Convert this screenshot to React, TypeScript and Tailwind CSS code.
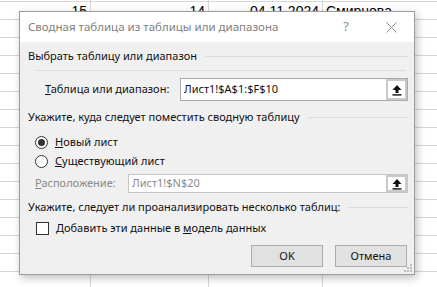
import React from "react";

const ui = { fontFamily: '"Noto Sans", "Open Sans", sans-serif' };
const cell = { fontFamily: '"Liberation Sans", Arial, sans-serif' };

const rows = Array.from({ length: 17 });

function UpButton() {
  return (
    <div className="flex h-full w-[21px] items-center justify-center border-2 border-[#c9c9c9] bg-white">
      <svg width="10" height="12" viewBox="0 0 10 12">
        <path d="M5 1 L9.5 6 L6.5 6 L6.5 9 L3.5 9 L3.5 6 L0.5 6 Z" fill="#111" />
        <rect x="0.5" y="10.2" width="9" height="1.4" fill="#111" />
      </svg>
    </div>
  );
}

function Heading({ children, top }: { children: React.ReactNode; top: string }) {
  return (
    <div className={`flex items-center gap-2 h-[16px] ${top}`}>
      <span className="whitespace-nowrap text-[11px] text-[#111]">{children}</span>
      <div className="h-px flex-1 bg-[#dcdcdc]" />
    </div>
  );
}

function Radio({ checked, children, top }: { checked?: boolean; children: React.ReactNode; top: string }) {
  return (
    <div className={`flex items-center h-[18px] pl-[7px] ${top}`}>
      <div className="flex h-[13px] w-[13px] items-center justify-center rounded-full border border-[#333] bg-white">
        {checked && <div className="h-[7px] w-[7px] rounded-full bg-[#333]" />}
      </div>
      <span className="ml-[7px] whitespace-nowrap text-[11px] text-[#111]">{children}</span>
    </div>
  );
}

export default function App() {
  return (
    <div className="relative h-[287px] w-[437px] overflow-hidden bg-white">
      {/* spreadsheet behind */}
      <div className="mt-[-16px]">
        {rows.map((_, i) => (
          <div key={i} className="grid h-[18px] grid-cols-[91px_118px_114px_1fr] border-b border-[#d6d6d6]" style={cell}>
            <div className="border-r border-[#d6d6d6] pr-[3px] text-right text-[14px] leading-[18px]">{i === 1 ? "15" : ""}</div>
            <div className="border-r border-[#d6d6d6] pr-[3px] text-right text-[14px] leading-[18px]">{i === 1 ? "14" : ""}</div>
            <div className="border-r border-[#d6d6d6] pr-[3px] text-right text-[14px] leading-[18px]">{i === 1 ? "04.11.2024" : ""}</div>
            <div className="pl-[3px] text-[14px] leading-[18px]">{i === 1 ? "Смирнова" : ""}</div>
          </div>
        ))}
      </div>

      {/* dialog */}
      <div
        className="absolute left-[19px] top-[11px] flex h-[264px] w-[396px] flex-col border border-[#9c9c9c] bg-[#f0f0f0] shadow-[2px_3px_8px_rgba(0,0,0,0.25)]"
        style={ui}
      >
        <div className="flex h-[30px] items-center bg-white pl-[8px]">
          <span className="flex-1 whitespace-nowrap text-[11.5px] text-[#808080]">Сводная таблица из таблицы или диапазона</span>
          <span className="mr-[37px] text-[13px] text-[#909090]">?</span>
          <svg width="11" height="11" viewBox="0 0 11 11" className="mr-[17px]">
            <path d="M0.5 0.5 L10.5 10.5 M10.5 0.5 L0.5 10.5" stroke="#8a8a8a" strokeWidth="1" />
          </svg>
        </div>

        <div className="flex flex-1 flex-col pl-[8px] pr-[6px]">
          <Heading top="mt-[6px]">Выбрать таблицу или диапазон</Heading>
          <div className="ml-[8px] mt-[6px] mr-[2px] h-px bg-[#dcdcdc]" />

          <div className="mt-[7px] flex h-[23px] items-center pl-[17px]">
            <span className="w-[135px] whitespace-nowrap text-[11px] text-[#111]">
              <span className="underline">Т</span>аблица или диапазон:
            </span>
            <div className="flex h-full flex-1 items-center border border-[#a9a9a9] bg-white">
              <span className="flex-1 pl-[3px] text-[11px] text-[#111]">Лист1!$A$1:$F$10</span>
              <UpButton />
            </div>
          </div>

          <Heading top="mt-[8px]">Укажите, куда следует поместить сводную таблицу</Heading>
          <Radio checked top="mt-[8px]">
            <span className="underline">Н</span>овый лист
          </Radio>
          <Radio top="mt-[1px]">
            <span className="underline">С</span>уществующий лист
          </Radio>

          <div className="mt-[4px] flex h-[19px] items-center pl-[7px]">
            <span className="w-[93px] whitespace-nowrap text-[11px] text-[#8a8a8a]">
              <span className="underline">Р</span>асположение:
            </span>
            <div className="flex h-full flex-1 items-center border border-[#c6c6c6] bg-white">
              <span className="flex-1 pl-[3px] text-[11px] text-[#8a8a8a]">Лист1!$N$20</span>
              <UpButton />
            </div>
          </div>

          <Heading top="mt-[6px]">Укажите, следует ли проанализировать несколько таблиц:</Heading>

          <div className="mt-[4px] flex h-[18px] items-center pl-[8px]">
            <div className="h-[13px] w-[13px] border border-[#333] bg-white" />
            <span className="ml-[7px] whitespace-nowrap text-[11px] text-[#111]">
              Добавить эти данные в <span className="underline">м</span>одель данных
            </span>
          </div>

          <div className="mt-[8px] flex justify-end gap-[12px] pr-[1px]">
            <button className="h-[22px] w-[72px] border border-[#adadad] bg-[#e1e1e1] text-[11px] text-[#111]">OK</button>
            <button className="h-[22px] w-[72px] border border-[#adadad] bg-[#e1e1e1] text-[11px] text-[#111]">Отмена</button>
          </div>
        </div>

        <svg width="8" height="8" viewBox="0 0 8 8" className="absolute bottom-[2px] right-[2px]">
          <rect x="6" y="0" width="2" height="2" fill="#bdbdbd" />
          <rect x="3" y="3" width="2" height="2" fill="#bdbdbd" />
          <rect x="6" y="3" width="2" height="2" fill="#bdbdbd" />
          <rect x="0" y="6" width="2" height="2" fill="#bdbdbd" />
          <rect x="3" y="6" width="2" height="2" fill="#bdbdbd" />
          <rect x="6" y="6" width="2" height="2" fill="#bdbdbd" />
        </svg>
      </div>
    </div>
  );
}
